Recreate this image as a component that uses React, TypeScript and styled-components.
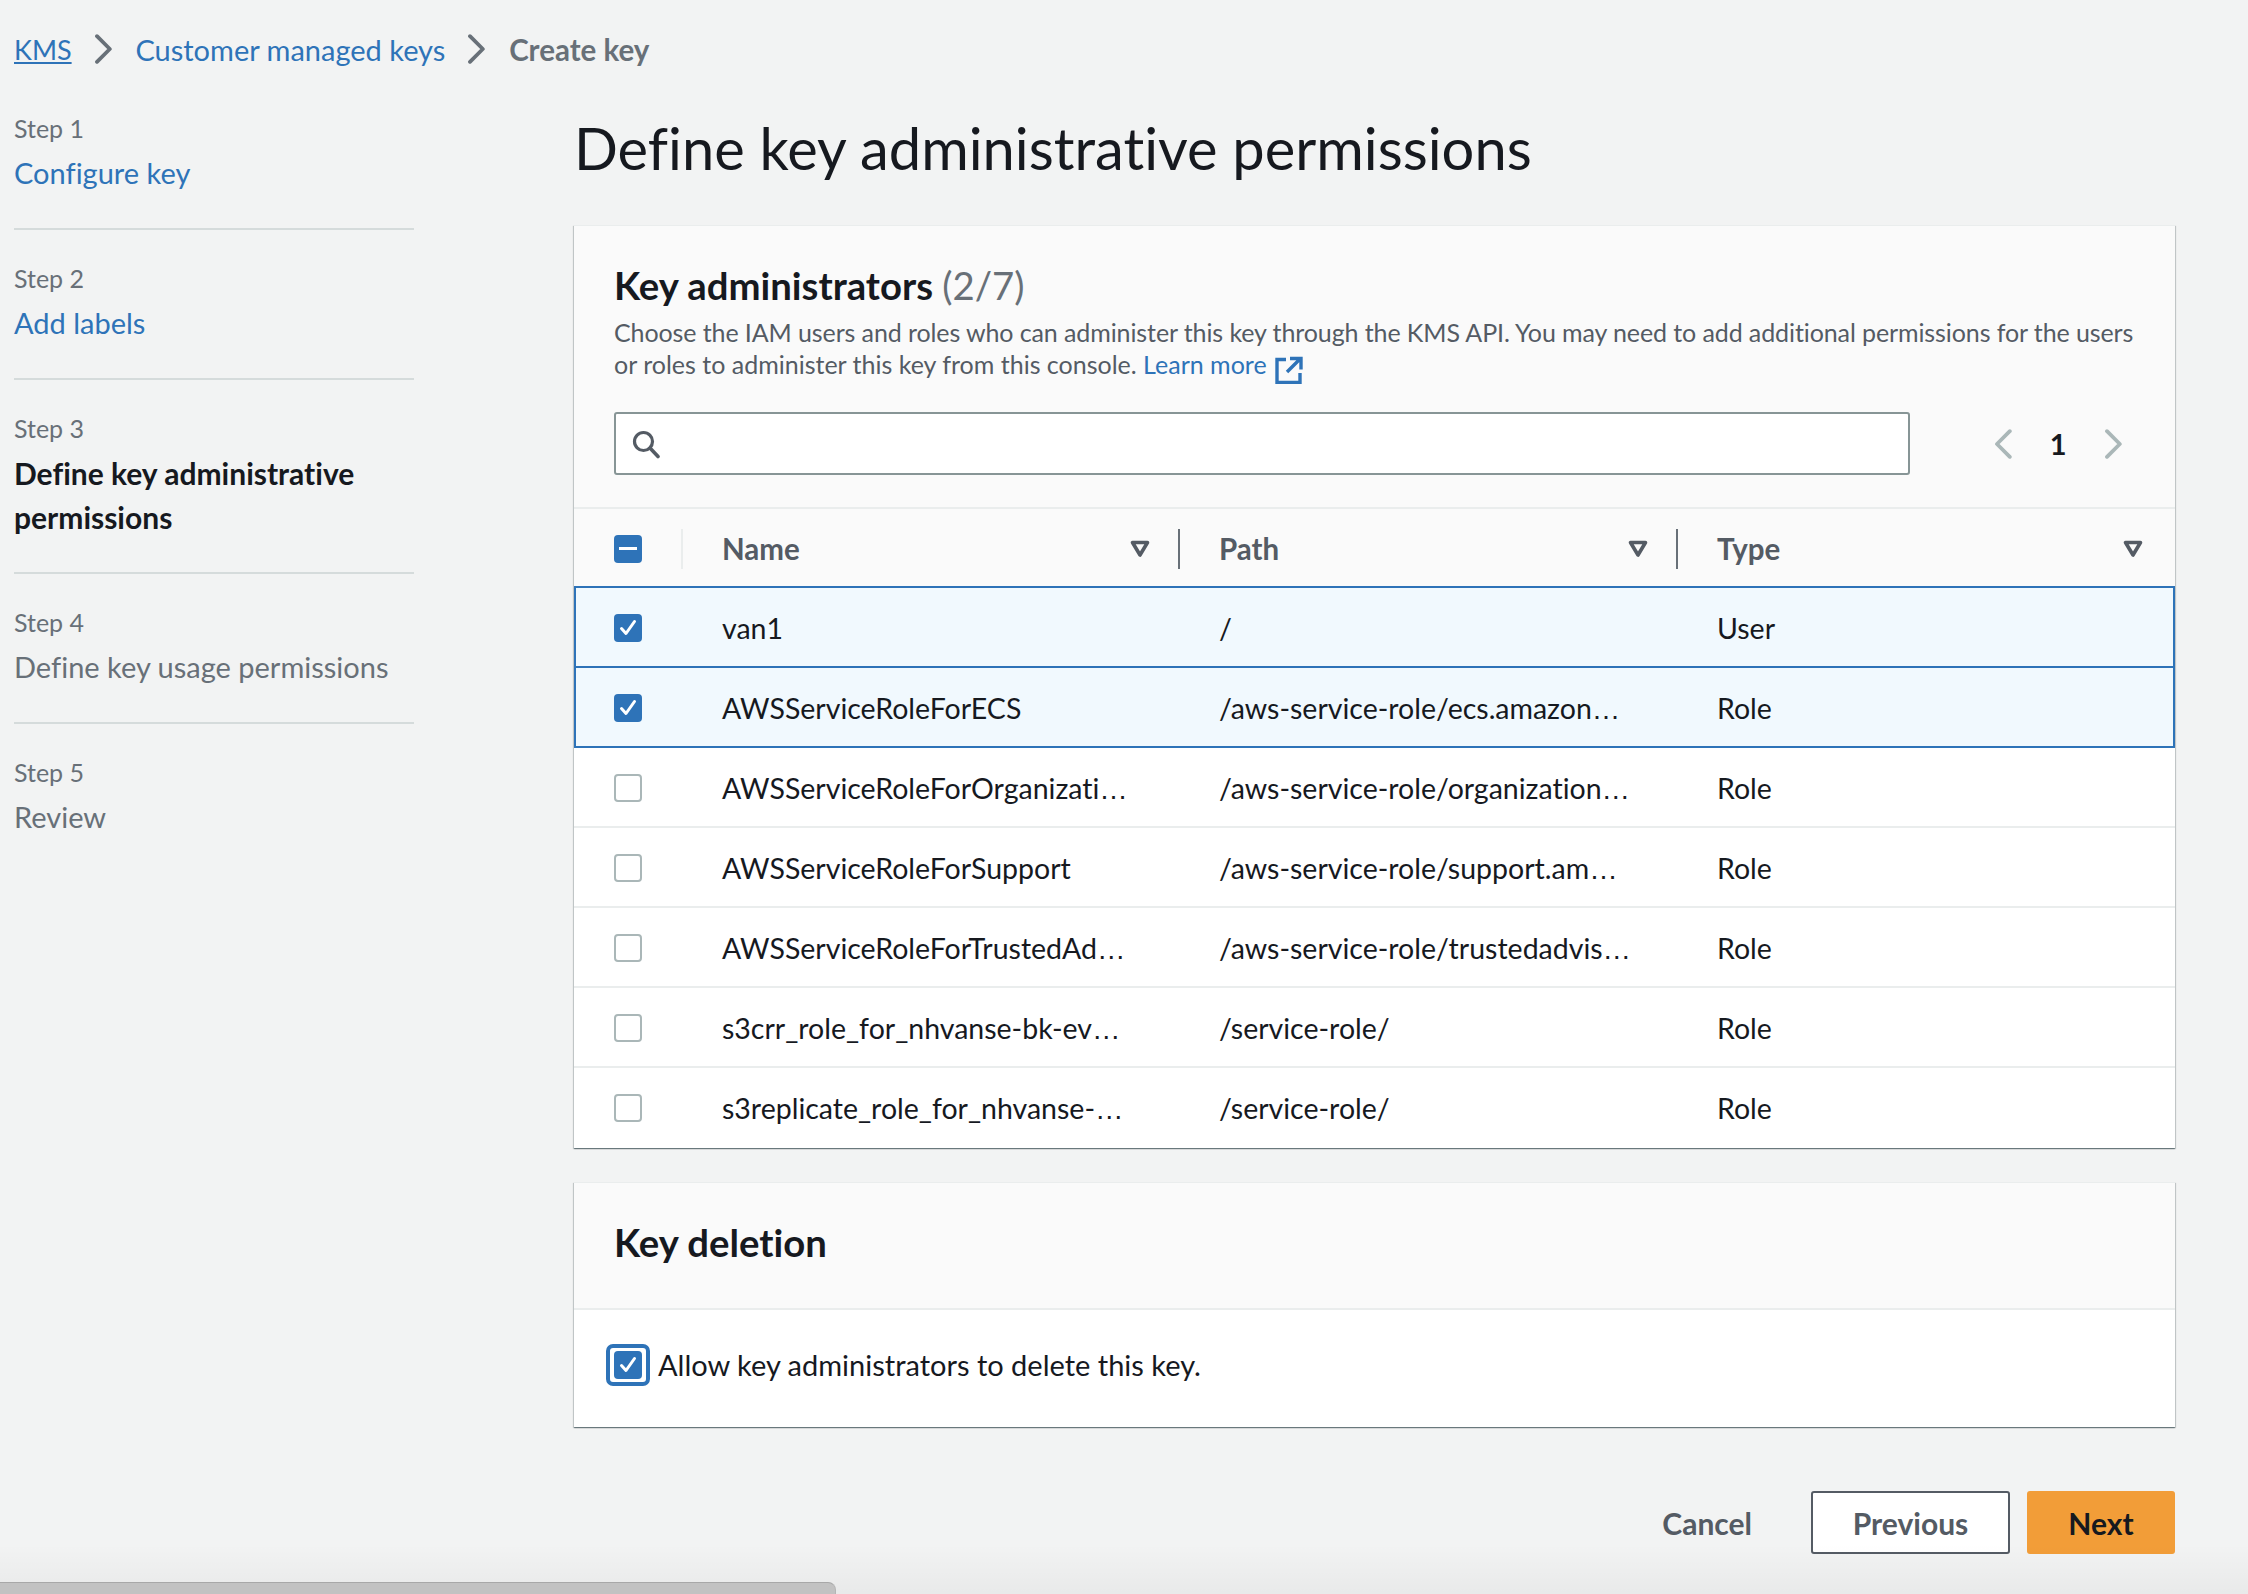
import React from 'react';
import styled, { createGlobalStyle } from 'styled-components';

const BLUE = '#2e73b8';
const FONT = `Lato, "Liberation Sans", sans-serif`;

const steps = [
  { label: 'Step 1', title: 'Configure key', state: 'link' },
  { label: 'Step 2', title: 'Add labels', state: 'link' },
  { label: 'Step 3', title: 'Define key administrative permissions', state: 'active' },
  { label: 'Step 4', title: 'Define key usage permissions', state: 'off' },
  { label: 'Step 5', title: 'Review', state: 'off' },
];

const rows = [
  { name: 'van1', path: '/', type: 'User', selected: true },
  { name: 'AWSServiceRoleForECS', path: '/aws-service-role/ecs.amazon…', type: 'Role', selected: true },
  { name: 'AWSServiceRoleForOrganizati…', path: '/aws-service-role/organization…', type: 'Role', selected: false },
  { name: 'AWSServiceRoleForSupport', path: '/aws-service-role/support.am…', type: 'Role', selected: false },
  { name: 'AWSServiceRoleForTrustedAd…', path: '/aws-service-role/trustedadvis…', type: 'Role', selected: false },
  { name: 's3crr_role_for_nhvanse-bk-ev…', path: '/service-role/', type: 'Role', selected: false },
  { name: 's3replicate_role_for_nhvanse-…', path: '/service-role/', type: 'Role', selected: false },
];

function Chevron({ left, color, size }: { left?: boolean; color: string; size: number }) {
  return (
    <svg width={size * 0.66} height={size} viewBox="0 0 20 30" fill="none">
      <path
        d={left ? 'M17 2 4 15l13 13' : 'M3 2l13 13L3 28'}
        stroke={color}
        strokeWidth="3.8"
        strokeLinecap="round"
        strokeLinejoin="round"
      />
    </svg>
  );
}

function FilterCaret() {
  return (
    <svg width="20" height="18" viewBox="0 0 20 18" fill="none">
      <path d="M2.5 2.5h15L10 15z" stroke="#545b64" strokeWidth="3.6" strokeLinejoin="round" />
    </svg>
  );
}

function Tick() {
  return (
    <svg width="22" height="22" viewBox="0 0 22 22" fill="none">
      <path d="M4.5 11.5l4.5 5 8.5-12" stroke="#fff" strokeWidth="3" strokeLinecap="round" strokeLinejoin="round" />
    </svg>
  );
}

// the cut-off names end in a wide, spaced ellipsis
function Truncated({ text }: { text: string }) {
  if (!text.endsWith('…')) return <>{text}</>;
  return (
    <>
      {text.slice(0, -1)}
      <Dots>…</Dots>
    </>
  );
}

export default function App() {
  return (
    <Page>
      <GlobalStyle />
      <Breadcrumbs>
        <RootCrumb>KMS</RootCrumb>
        <Chevron color="#687078" size={30} />
        <CrumbLink>Customer managed keys</CrumbLink>
        <Chevron color="#687078" size={30} />
        <CrumbCurrent>Create key</CrumbCurrent>
      </Breadcrumbs>
      <Layout>
        <Sidebar>
          {steps.map((step, i) => (
            <StepItem key={step.label} $last={i === steps.length - 1}>
              <StepLabel>{step.label}</StepLabel>
              <StepTitle $state={step.state}>{step.title}</StepTitle>
            </StepItem>
          ))}
        </Sidebar>
        <Main>
          <Title>Define key administrative permissions</Title>
          <Card>
            <CardHeader>
              <CardTitle>
                Key administrators <Count>(2/7)</Count>
              </CardTitle>
              <Description>
                <TightText>
                  Choose the IAM users and roles who can administer this key through the KMS API. You may need to add
                  additional permissions for the users
                </TightText>{' '}
                or roles to administer this key from this console. <LearnMore>Learn more</LearnMore>
                <ExternalIcon width="28" height="28" viewBox="0 0 28 28" fill="none">
                  <path d="M11 3.5H2v23h23V17" stroke={BLUE} strokeWidth="3.4" />
                  <path d="M12 16 25 3M15 2.5h11v11" stroke={BLUE} strokeWidth="3.4" />
                </ExternalIcon>
              </Description>
              <SearchRow>
                <SearchBox>
                  <svg width="30" height="30" viewBox="0 0 30 30" fill="none">
                    <circle cx="12.5" cy="12.5" r="9" stroke="#545b64" strokeWidth="3.2" />
                    <path d="M19 19l8 8.5" stroke="#545b64" strokeWidth="3.6" strokeLinecap="round" />
                  </svg>
                </SearchBox>
                <Pager>
                  <Chevron left color="#aab7b8" size={30} />
                  <PageNumber>1</PageNumber>
                  <Chevron color="#aab7b8" size={30} />
                </Pager>
              </SearchRow>
            </CardHeader>
            <HeaderRow>
              <CheckCell>
                <CheckBox $checked>
                  <Dash />
                </CheckBox>
              </CheckCell>
              <HeaderCell>
                <Divider $light />
                <HeaderText>Name</HeaderText>
                <FilterCaret />
              </HeaderCell>
              <HeaderCell>
                <Divider />
                <HeaderText>Path</HeaderText>
                <FilterCaret />
              </HeaderCell>
              <HeaderCell $end>
                <Divider />
                <HeaderText>Type</HeaderText>
                <FilterCaret />
              </HeaderCell>
            </HeaderRow>
            {rows.map((row) => (
              <Row key={row.name} $selected={row.selected}>
                <CheckCell>
                  <CheckBox $checked={row.selected}>{row.selected && <Tick />}</CheckBox>
                </CheckCell>
                <Cell>
                  <Truncated text={row.name} />
                </Cell>
                <Cell>
                  <Truncated text={row.path} />
                </Cell>
                <Cell>{row.type}</Cell>
              </Row>
            ))}
          </Card>
          <Card>
            <DeletionHeader>
              <CardTitle>Key deletion</CardTitle>
            </DeletionHeader>
            <DeletionBody>
              <FocusRing>
                <CheckBox $checked>
                  <Tick />
                </CheckBox>
              </FocusRing>
              <CheckLabel>Allow key administrators to delete this key.</CheckLabel>
            </DeletionBody>
          </Card>
          <Footer>
            <CancelButton>Cancel</CancelButton>
            <PreviousButton>Previous</PreviousButton>
            <NextButton>Next</NextButton>
          </Footer>
        </Main>
      </Layout>
      <BottomShade />
      <ScrollStrip />
    </Page>
  );
}

const GlobalStyle = createGlobalStyle`
  * { box-sizing: border-box; }
  html, body { margin: 0; padding: 0; background: #f2f3f3; }
  body { font-family: ${FONT}; color: #16191f; font-variant-ligatures: none; }
`;

const Page = styled.div`
  position: relative;
  height: 1594px;
  overflow: hidden;
  padding: 27px 73px 0 14px;
`;

const Breadcrumbs = styled.nav`
  display: flex;
  align-items: center;
  height: 44px;
  margin-bottom: 41px;
  font-size: 29px;
  gap: 22px;
`;

const CrumbLink = styled.a`
  color: ${BLUE};
`;

const RootCrumb = styled(CrumbLink)`
  font-size: 27px;
  text-decoration: underline;
`;

const CrumbCurrent = styled.span`
  color: #687078;
  font-weight: 700;
  font-size: 29.5px;
`;

const Layout = styled.div`
  display: grid;
  grid-template-columns: 400px 1fr;
  gap: 160px;
`;

const Sidebar = styled.aside`
  display: flex;
  flex-direction: column;
`;

const StepItem = styled.div<{ $last?: boolean }>`
  padding-bottom: 33px;
  margin-bottom: 32px;
  border-bottom: ${(p) => (p.$last ? 'none' : '2px solid #d5dbdb')};
`;

const StepLabel = styled.div`
  font-size: 25px;
  line-height: 32px;
  margin-bottom: 7px;
  color: #687078;
`;

const StepTitle = styled.div<{ $state: string }>`
  font-size: ${(p) => (p.$state === 'active' ? 30 : 29)}px;
  line-height: 44px;
  color: ${(p) => (p.$state === 'link' ? BLUE : p.$state === 'active' ? '#16191f' : '#687078')};
  font-weight: ${(p) => (p.$state === 'active' ? 700 : 400)};
`;

const Main = styled.main`
  padding-top: 2px;
`;

const Title = styled.h1`
  margin: 0 0 43px;
  font-size: 57.8px;
  line-height: 68px;
  font-weight: 400;
`;

const Card = styled.section`
  background: #fff;
  margin-bottom: 34px;
  border-top: 1px solid #eaeded;
  box-shadow: 0 1px 1px 0 rgba(0, 28, 36, 0.4), 1px 1px 1px 0 rgba(0, 28, 36, 0.15),
    -1px 1px 1px 0 rgba(0, 28, 36, 0.15);
`;

const CardHeader = styled.header`
  background: #fafafa;
  padding: 37px 20px 32px 40px;
  border-bottom: 2px solid #eaeded;
`;

const CardTitle = styled.h2`
  margin: 0;
  font-size: 38.3px;
  line-height: 44px;
  font-weight: 700;
`;

const Count = styled.span`
  font-weight: 400;
  color: #687078;
`;

const Description = styled.p`
  margin: 9px 0 32px;
  font-size: 25px;
  line-height: 32px;
  color: #545b64;
`;

const TightText = styled.span`
  letter-spacing: -0.1px;
`;

const LearnMore = styled.a`
  color: ${BLUE};
`;

const ExternalIcon = styled.svg`
  margin: -6px 0 -6px 8px;
  vertical-align: -4px;
`;

const SearchRow = styled.div`
  display: flex;
  align-items: center;
`;

const SearchBox = styled.div`
  display: flex;
  align-items: center;
  width: 1296px;
  height: 63px;
  padding-left: 15px;
  background: #fff;
  border: 2px solid #879596;
  border-radius: 3px;
`;

const Pager = styled.div`
  display: flex;
  align-items: center;
  gap: 37px;
  margin-left: 83px;
`;

const PageNumber = styled.span`
  font-size: 29px;
  font-weight: 700;
`;

const columns = `
  display: grid;
  grid-template-columns: 107px 497px 498px 1fr;
  align-items: center;
  height: 80px;
`;

const HeaderRow = styled.div`
  ${columns}
  height: 79px;
  background: #fafafa;
`;

const Row = styled.div<{ $selected: boolean }>`
  ${columns}
  position: relative;
  background: ${(p) => (p.$selected ? '#f1f9fe' : '#fff')};
  box-shadow: ${(p) =>
    p.$selected
      ? `inset 2px 0 0 ${BLUE}, inset -2px 0 0 ${BLUE}, inset 0 -2px 0 ${BLUE}, 0 -2px 0 ${BLUE}`
      : 'inset 0 -2px 0 #eaeded'};
  &:last-child {
    box-shadow: none;
  }
`;

const CheckCell = styled.div`
  display: flex;
  padding-left: 40px;
`;

const CheckBox = styled.span<{ $checked?: boolean }>`
  display: flex;
  flex: none;
  align-items: center;
  justify-content: center;
  width: 28px;
  height: 28px;
  border-radius: 4px;
  background: ${(p) => (p.$checked ? BLUE : '#fff')};
  border: ${(p) => (p.$checked ? 'none' : '2px solid #aab7b8')};
`;

const Dash = styled.span`
  width: 18px;
  height: 3px;
  background: #fff;
`;

const HeaderCell = styled.div<{ $end?: boolean }>`
  display: flex;
  align-items: center;
  padding-right: ${(p) => (p.$end ? 32 : 28)}px;
`;

const Divider = styled.span<{ $light?: boolean }>`
  width: 2px;
  height: 40px;
  margin-right: 39px;
  background: ${(p) => (p.$light ? '#eaeded' : '#687078')};
`;

const HeaderText = styled.span`
  flex: 1;
  font-size: 29.5px;
  font-weight: 700;
  color: #545b64;
`;

const Cell = styled.div`
  padding-left: 41px;
  font-size: 28.5px;
  white-space: nowrap;
`;

const Dots = styled.span`
  font-family: "Liberation Sans", sans-serif;
`;

const DeletionHeader = styled.header`
  display: flex;
  align-items: center;
  height: 127px;
  padding: 0 0 7px 40px;
  background: #fafafa;
  border-bottom: 2px solid #eaeded;
`;

const DeletionBody = styled.div`
  display: flex;
  align-items: center;
  gap: 8px;
  height: 117px;
  padding: 0 0 8px 32px;
`;

const FocusRing = styled.span`
  display: flex;
  align-items: center;
  justify-content: center;
  width: 44px;
  height: 42px;
  border: 4px solid ${BLUE};
  border-radius: 7px;
`;

const CheckLabel = styled.label`
  font-size: 29px;
`;

const Footer = styled.footer`
  display: flex;
  justify-content: flex-end;
  align-items: center;
  margin-top: 64px;
`;

const buttonText = `
  height: 63px;
  font-family: ${FONT};
  font-size: 30px;
  font-weight: 700;
  border-radius: 3px;
  padding: 0;
`;

const CancelButton = styled.button`
  ${buttonText}
  margin-right: 59px;
  background: none;
  border: none;
  color: #545b64;
`;

const PreviousButton = styled.button`
  ${buttonText}
  width: 199px;
  margin-right: 17px;
  background: #fff;
  border: 2px solid #545b64;
  color: #545b64;
`;

const NextButton = styled.button`
  ${buttonText}
  width: 148px;
  background: #f29d38;
  border: none;
  color: #16191f;
`;

const BottomShade = styled.div`
  position: absolute;
  left: 0;
  right: 0;
  bottom: 0;
  height: 50px;
  background: linear-gradient(rgba(0, 0, 0, 0), rgba(0, 0, 0, 0.04));
  pointer-events: none;
`;

const ScrollStrip = styled.div`
  position: absolute;
  left: 0;
  bottom: 0;
  width: 836px;
  height: 12px;
  background: #c2c2c2;
  border-top: 1px solid #a8a8a8;
  border-right: 1px solid #b5b5b5;
  border-top-right-radius: 8px;
`;
